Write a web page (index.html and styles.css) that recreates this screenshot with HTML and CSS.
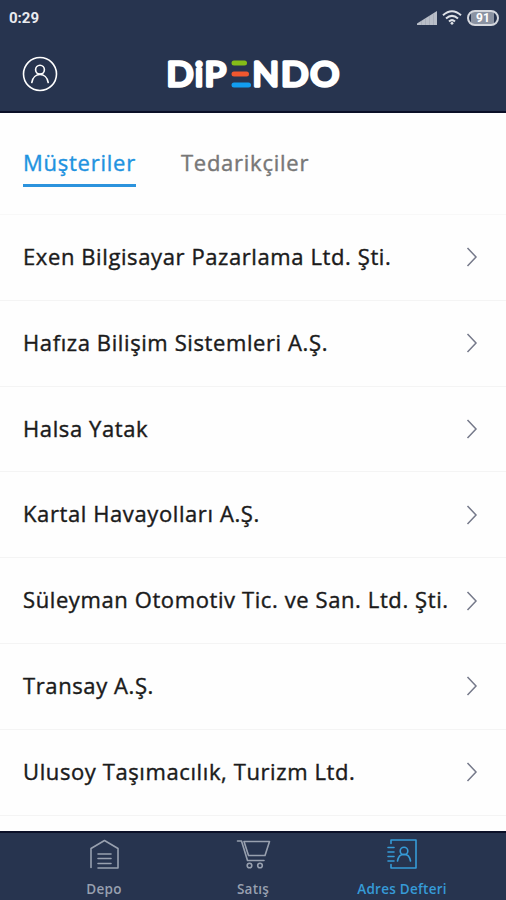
FILE: index.html
```html
<!DOCTYPE html>
<html lang="tr">
<head>
    <meta charset="UTF-8">
    <meta name="viewport" content="width=device-width, initial-scale=1.0">
    <title>Dipendo - Adres Defteri</title>
    <link rel="stylesheet" href="styles.css">
</head>
<body>
    <div class="app">
        <header class="header">
            <div class="status-bar">
                <span class="time">0:29</span>
                <div class="status-icons">
                    <svg class="signal" width="20" height="14" viewBox="0 0 20 14">
                        <path d="M0 14V12.5L20 0V14Z" fill="#b9bec8"/>
                        <path d="M4.5 10V14M8.5 8V14M12.5 5V14M16.5 3V14" stroke="#9aa1af" stroke-width=".5"/>
                    </svg>
                    <svg class="wifi" width="20" height="15" viewBox="0 0 20 15" fill="none" stroke="#dfe2e7" stroke-width="2">
                        <path d="M1 5.3Q10-2.8 19 5.3M4 8.5Q10 3.2 16 8.5M7 11.4Q10 8.8 13 11.4"/>
                        <circle cx="10" cy="13.3" r="1.4" fill="#dfe2e7" stroke="none"/>
                    </svg>
                    <span class="battery">91</span>
                </div>
            </div>
            <div class="top-bar">
                <svg class="profile" width="36" height="36" viewBox="0 0 36 36" fill="none" stroke="#fff" stroke-width="1.6">
                    <circle cx="18" cy="18" r="16.5"/>
                    <circle cx="18" cy="13.7" r="4.4"/>
                    <path d="M9.8 26.5C11.5 15.8 24.5 15.8 26.2 26.5" stroke-linecap="round"/>
                </svg>
                <svg class="logo" width="180" height="60" viewBox="0 -12 180 60">
                    <g class="logo-text">
                        <text x="1.4" y="30" textLength="27" lengthAdjust="spacingAndGlyphs">D</text>
                        <text x="30" y="30">i</text>
                        <text x="39.6" y="30" textLength="21.5" lengthAdjust="spacingAndGlyphs">P</text>
                        <text x="87.5" y="30" textLength="26.5" lengthAdjust="spacingAndGlyphs">N</text>
                        <text x="116" y="30" textLength="27.5" lengthAdjust="spacingAndGlyphs">D</text>
                        <text x="145.2" y="30" textLength="29" lengthAdjust="spacingAndGlyphs">O</text>
                    </g>
                    <g stroke-width="5" stroke-linecap="round">
                        <path d="M69 7H79.5" stroke="#85bd18"/>
                        <path d="M69 18H81.5" stroke="#f0572f"/>
                        <path d="M69 29H83.5" stroke="#129df0"/>
                    </g>
                </svg>
            </div>
        </header>

        <nav class="tabs">
            <a class="tab active">Müşteriler</a>
            <a class="tab">Tedarikçiler</a>
        </nav>

        <ul class="list">
            <li class="row"><span class="name">Exen Bilgisayar Pazarlama Ltd. Şti.</span><svg class="arrow" viewBox="0 0 12 20"><path d="M1.5 1L10 10L1.5 19"/></svg></li>
            <li class="row"><span class="name">Hafıza Bilişim Sistemleri A.Ş.</span><svg class="arrow" viewBox="0 0 12 20"><path d="M1.5 1L10 10L1.5 19"/></svg></li>
            <li class="row"><span class="name">Halsa Yatak</span><svg class="arrow" viewBox="0 0 12 20"><path d="M1.5 1L10 10L1.5 19"/></svg></li>
            <li class="row"><span class="name">Kartal Havayolları A.Ş.</span><svg class="arrow" viewBox="0 0 12 20"><path d="M1.5 1L10 10L1.5 19"/></svg></li>
            <li class="row"><span class="name">Süleyman Otomotiv Tic. ve San. Ltd. Şti.</span><svg class="arrow" viewBox="0 0 12 20"><path d="M1.5 1L10 10L1.5 19"/></svg></li>
            <li class="row"><span class="name">Transay A.Ş.</span><svg class="arrow" viewBox="0 0 12 20"><path d="M1.5 1L10 10L1.5 19"/></svg></li>
            <li class="row"><span class="name">Ulusoy Taşımacılık, Turizm Ltd.</span><svg class="arrow" viewBox="0 0 12 20"><path d="M1.5 1L10 10L1.5 19"/></svg></li>
        </ul>

        <footer class="bottom-nav">
            <a class="nav-item">
                <svg width="36" height="34" viewBox="0 0 36 34">
                    <path d="M5 30.5V11.5L18.5 3.5L32 11.5V31H12"/>
                    <path d="M12 17H25M12 21.5H25M12 26.5H25"/>
                </svg>
                <span>Depo</span>
            </a>
            <a class="nav-item">
                <svg width="36" height="34" viewBox="0 0 36 34">
                    <path d="M2.5 4H6.5L12.5 23.5H29"/>
                    <path d="M9 4.5H34.5L30 18.5H13.5Z"/>
                    <circle cx="14.5" cy="28.5" r="2.3"/>
                    <circle cx="25" cy="28.5" r="2.3"/>
                </svg>
                <span>Satış</span>
            </a>
            <a class="nav-item active">
                <svg width="36" height="34" viewBox="0 0 36 34">
                    <path d="M7 6.5V3H32V31H7V27.5"/>
                    <path d="M4 10.5H10M4 15H10M4 19.5H10M4 24H10"/>
                    <circle cx="20" cy="14" r="3.8"/>
                    <path d="M13.5 24C15 15 25 15 26.5 24"/>
                </svg>
                <span>Adres Defteri</span>
            </a>
        </footer>
    </div>
</body>
</html>
```
FILE: styles.css
```css
* {
    box-sizing: border-box;
}
body {
    margin: 0;
    font-family: "Open Sans", sans-serif;
    background: #fefefe;
}
.app {
    display: flex;
    flex-direction: column;
    height: 900px;
    overflow: hidden;
}
.header {
    height: 113px;
    background: #27344f;
    border-bottom: 2px solid #0b1028;
}
.status-bar {
    display: flex;
    justify-content: space-between;
    align-items: center;
    height: 35px;
    padding: 0 7px 0 9px;
    color: #e9ebef;
}
.time {
    font: bold 15px Roboto, sans-serif;
}
.status-icons {
    display: flex;
    align-items: center;
    gap: 5px;
}
.battery {
    width: 32px;
    height: 16px;
    border: 2px solid #d5d8de;
    border-radius: 8px;
    background: linear-gradient(90deg, #27344f 2px, #8b93a2 2px, #8b93a2 25px, #27344f 25px);
    font: bold 12px/12px Roboto, sans-serif;
    text-align: center;
    color: #fff;
}
.top-bar {
    display: grid;
    grid-template-columns: 143px 1fr;
    align-items: center;
    height: 77px;
    padding-left: 22px;
}
.logo-text {
    font: 33.5px Lato, sans-serif;
    fill: #fff;
    stroke: #fff;
    stroke-width: 3.4px;
    stroke-linejoin: round;
}
.tabs {
    display: flex;
    gap: 45px;
    height: 102px;
    padding: 33px 23px 0;
    border-bottom: 1px solid #f8f8f8;
}
.tab {
    height: 41px;
    font-size: 22px;
    line-height: 32px;
    letter-spacing: 0.75px;
    color: #777;
    -webkit-text-stroke: 0.4px;
}
.tab.active {
    color: #1f93e0;
    border-bottom: 3px solid #2c93dd;
}
.list {
    flex: 1;
    margin: 0;
    padding: 0;
    list-style: none;
}
.row {
    display: flex;
    justify-content: space-between;
    align-items: center;
    height: 85.8px;
    padding: 0 28px 0 23px;
    border-bottom: 1px solid #f4f4f4;
}
.name {
    padding-bottom: 2.6px;
    font-size: 22px;
    letter-spacing: 0.6px;
    white-space: nowrap;
    color: #1b1b1b;
    -webkit-text-stroke: 0.4px;
}
.arrow {
    flex: none;
    width: 12px;
    height: 20px;
    fill: none;
    stroke: #75798a;
    stroke-width: 1.5;
}
.bottom-nav {
    display: flex;
    justify-content: center;
    height: 69px;
    padding-top: 4px;
    background: #27344f;
    border-top: 2px solid #0b1028;
}
.nav-item {
    display: flex;
    flex-direction: column;
    align-items: center;
    width: 149px;
    font-size: 13.5px;
    font-weight: 600;
    letter-spacing: 0.25px;
    color: #98a0af;
}
.nav-item svg {
    fill: none;
    stroke: currentColor;
    stroke-width: 1.6;
    stroke-linejoin: round;
    stroke-linecap: round;
}
.nav-item span {
    margin-top: 8px;
    line-height: 20px;
}
.nav-item.active {
    color: #369bd7;
}
```
